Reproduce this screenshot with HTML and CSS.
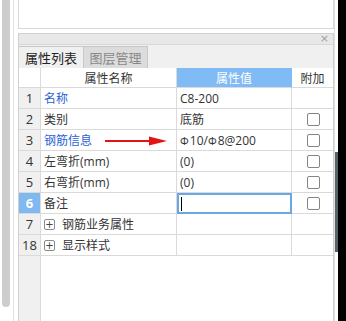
FILE: index.html
```html
<!DOCTYPE html>
<html lang="zh">
<head>
    <meta charset="UTF-8">
    <title>属性列表</title>
    <link rel="stylesheet" href="styles.css">
</head>
<body>
    <div class="screen">
        <div class="lscroll">
            <div class="lthumb"></div>
            <div class="lline"></div>
        </div>
        <div class="main">
            <div class="topbox"></div>
            <div class="panel">
                <div class="ptitle"><span class="close">×</span></div>
                <div class="tabs">
                    <div class="tab active">属性列表</div>
                    <div class="tab">图层管理</div>
                </div>
                <div class="grid">
                    <div class="cell num head"></div>
                    <div class="cell head">属性名称</div>
                    <div class="cell head val-head">属性值</div>
                    <div class="cell head extra">附加</div>

                    <div class="cell num">1</div>
                    <div class="cell name link">名称</div>
                    <div class="cell value">C8-200</div>
                    <div class="cell extra"></div>

                    <div class="cell num">2</div>
                    <div class="cell name">类别</div>
                    <div class="cell value">底筋</div>
                    <div class="cell extra"><span class="check"></span></div>

                    <div class="cell num">3</div>
                    <div class="cell name link arrow-cell">钢筋信息
                        <svg class="arrow" width="62" height="10" viewBox="0 0 62 10">
                            <rect x="0" y="4" width="47" height="2" fill="#e31414"/>
                            <path d="M44 0.5 L62 5 L44 9.5 Z" fill="#e31414"/>
                        </svg>
                    </div>
                    <div class="cell value"><span class="bar">Φ</span>10/<span class="bar">Φ</span>8@200</div>
                    <div class="cell extra"><span class="check"></span></div>

                    <div class="cell num">4</div>
                    <div class="cell name">左弯折(mm)</div>
                    <div class="cell value">(0)</div>
                    <div class="cell extra"><span class="check"></span></div>

                    <div class="cell num">5</div>
                    <div class="cell name">右弯折(mm)</div>
                    <div class="cell value">(0)</div>
                    <div class="cell extra"><span class="check"></span></div>

                    <div class="cell num selected">6</div>
                    <div class="cell name">备注</div>
                    <div class="cell value editing"><span class="caret"></span></div>
                    <div class="cell extra"><span class="check"></span></div>

                    <div class="cell num">7</div>
                    <div class="cell name"><span class="plus">+</span>钢筋业务属性</div>
                    <div class="cell value"></div>
                    <div class="cell extra"></div>

                    <div class="cell num">18</div>
                    <div class="cell name"><span class="plus">+</span>显示样式</div>
                    <div class="cell value"></div>
                    <div class="cell extra"></div>
                </div>
                <div class="rest"><div class="rest-num"></div></div>
            </div>
        </div>
        <div class="rscroll"><div class="rthumb"></div></div>
        <div class="edge"></div>
    </div>
</body>
</html>
```

FILE: styles.css
```css
body {
    margin: 0;
    font-family: "Open Sans", "Noto Sans CJK SC", sans-serif;
    font-size: 12px;
    color: #333;
    background-color: #fff;
}

.screen {
    display: flex;
    width: 346px;
    height: 321px;
    overflow: hidden;
}

.lscroll {
    display: flex;
    width: 18px;
    flex-shrink: 0;
}

.lthumb {
    width: 8px;
    height: 307px;
    margin-left: 2px;
    background-color: #cdcdcd;
    border-radius: 0 0 4px 4px;
}

.lline {
    width: 1px;
    margin-left: 3px;
    background-color: #e2e2e2;
}

.main {
    display: flex;
    flex-direction: column;
    width: 316px;
    flex-shrink: 0;
}

.topbox {
    height: 29px;
    box-sizing: border-box;
    border: 1px solid #d9d9d9;
    border-top: none;
}

.panel {
    flex: 1;
    display: flex;
    flex-direction: column;
    margin-top: 4px;
    border: 1px solid #d0d0d0;
    border-bottom: none;
}

.ptitle {
    height: 10px;
    background-color: #e8e8e8;
    border-bottom: 1px solid #d8d8d8;
    display: flex;
    justify-content: flex-end;
    align-items: center;
}

.close {
    color: #a0a0a0;
    font-family: "DejaVu Sans", sans-serif;
    font-size: 11px;
    line-height: 10px;
    margin-right: 4px;
}

.tabs {
    display: flex;
    height: 23px;
    background-color: #f0f0f0;
}

.tab {
    width: 64px;
    box-sizing: border-box;
    margin-top: 1px;
    display: flex;
    align-items: center;
    justify-content: center;
    font-size: 13px;
    color: #888;
    background-color: #dcdcdc;
    border: 1px solid #c8c8c8;
    border-bottom: none;
    border-left: none;
}

.tab.active {
    width: 65px;
    color: #222;
    background-color: #f0f0f0;
}

.grid {
    display: grid;
    grid-template-columns: 22px 136px 115px 41px;
    grid-auto-rows: 21px;
    grid-template-rows: 20px;
}

.cell {
    box-sizing: border-box;
    border-right: 1px solid #dadada;
    border-bottom: 1px solid #dadada;
    display: flex;
    align-items: center;
    padding-left: 3px;
    white-space: nowrap;
}

.cell.extra {
    border-right: none;
    justify-content: center;
    padding-left: 0;
}

.cell.num {
    justify-content: center;
    padding-left: 0;
    background-color: #f0f0f0;
    font-size: 13px;
}

.cell.num.head {
    background-color: #fff;
}

.cell.head {
    justify-content: center;
    padding-left: 0;
    font-size: 12px;
}

.cell.val-head {
    background-color: #80bbf5;
    color: #fff;
    border-right-color: #80bbf5;
}

.cell.num.selected {
    background-color: #80b8f0;
    color: #fff;
    font-weight: bold;
}

.link {
    color: #2a5fd6;
}

.arrow-cell {
    position: relative;
}

.arrow {
    position: absolute;
    left: 64px;
    top: 6px;
}

.bar {
    font-size: 11px;
    margin-right: 1px;
}

.check {
    width: 13px;
    height: 13px;
    box-sizing: border-box;
    border: 1px solid #858585;
    border-radius: 2px;
    background-color: #fff;
    margin-left: 1px;
}

.cell.editing {
    border: 2px solid #6aa7e5;
    padding-left: 2px;
}

.caret {
    width: 1px;
    height: 14px;
    background-color: #000;
}

.plus {
    width: 11px;
    height: 11px;
    box-sizing: border-box;
    border: 1px solid #8a8a8a;
    border-radius: 2px;
    display: inline-flex;
    align-items: center;
    justify-content: center;
    font-family: "DejaVu Sans", sans-serif;
    font-size: 10px;
    line-height: 9px;
    color: #444;
    margin-right: 7px;
}

.rest {
    flex: 1;
    display: flex;
}

.rest-num {
    width: 22px;
    box-sizing: border-box;
    background-color: #f0f0f0;
    border-right: 1px solid #dadada;
}

.rscroll {
    width: 4px;
    flex-shrink: 0;
    box-sizing: border-box;
    border-left: 1px solid #e0e0e0;
}

.rthumb {
    width: 3px;
    height: 100px;
    margin-top: 152px;
    background-color: #5c626a;
}

.edge {
    flex: 1;
    background-color: #000;
}
```
